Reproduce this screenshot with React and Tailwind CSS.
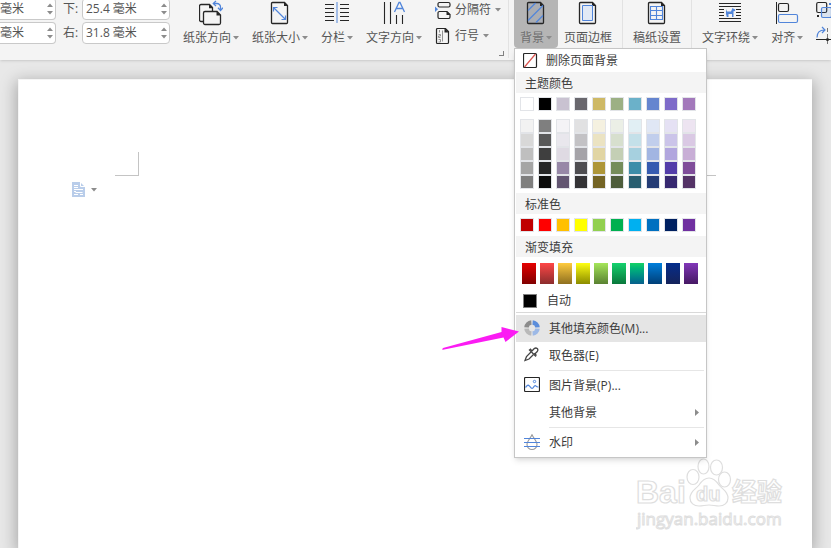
import { useState } from "react";

const THEME_COLORS = [
  "bg-white", "bg-black", "bg-[#c9c2d1]", "bg-[#69676d]", "bg-[#ceb966]",
  "bg-[#9cb084]", "bg-[#6bb1c9]", "bg-[#6585cf]", "bg-[#7e6bc9]", "bg-[#a379bb]",
];

const THEME_SHADES = [
  ["bg-[#f2f2f2]", "bg-[#7f7f7f]", "bg-[#f4f3f6]", "bg-[#e1e1e2]", "bg-[#f5f1e0]", "bg-[#ebefe6]", "bg-[#e1eff4]", "bg-[#e0e7f5]", "bg-[#e5e1f4]", "bg-[#ede4f1]"],
  ["bg-[#d8d8d8]", "bg-[#595959]", "bg-[#e9e7ed]", "bg-[#c3c2c5]", "bg-[#ebe3c2]", "bg-[#d7dfce]", "bg-[#c4e0e9]", "bg-[#c1ceec]", "bg-[#cbc4e9]", "bg-[#dac9e4]"],
  ["bg-[#bfbfbf]", "bg-[#3f3f3f]", "bg-[#dfdae3]", "bg-[#a5a3a8]", "bg-[#e1d5a3]", "bg-[#c4cfb5]", "bg-[#a6d0df]", "bg-[#a2b5e2]", "bg-[#b1a6de]", "bg-[#c8aed6]"],
  ["bg-[#a5a5a5]", "bg-[#262626]", "bg-[#9788a7]", "bg-[#4e4d51]", "bg-[#ae9638]", "bg-[#758c5a]", "bg-[#3d8da9]", "bg-[#365bb0]", "bg-[#533da9]", "bg-[#7f4d9a]"],
  ["bg-[#7f7f7f]", "bg-[#0c0c0c]", "bg-[#635672]", "bg-[#343336]", "bg-[#746425]", "bg-[#4e5d3c]", "bg-[#295e70]", "bg-[#243c75]", "bg-[#372970]", "bg-[#543367]"],
];

const STANDARD_COLORS = [
  "bg-[#c00000]", "bg-[#ff0000]", "bg-[#ffc000]", "bg-[#ffff00]", "bg-[#92d050]",
  "bg-[#00b050]", "bg-[#00b0f0]", "bg-[#0070c0]", "bg-[#002060]", "bg-[#7030a0]",
];

const GRADIENTS = [
  "from-[#e60000] to-[#800000]",
  "from-[#ff4646] to-[#8c2d2d]",
  "from-[#ffcb3e] to-[#8f7020]",
  "from-[#ffff14] to-[#8c8c00]",
  "from-[#a5e65a] to-[#5a8232]",
  "from-[#14d26e] to-[#0a783c]",
  "from-[#14d264] to-[#0a5f8c]",
  "from-[#007fdc] to-[#003f78]",
  "from-[#032d8c] to-[#14235a]",
  "from-[#8237b9] to-[#461964]",
];

const DARK = "#262626";
const BLUE = "#5185da";

function Caret({ className = "" }) {
  return (
    <svg width="6" height="4" viewBox="0 0 6 4" className={className}>
      <path d="M0 0h6L3 3.5z" fill="#8c8c8c" />
    </svg>
  );
}

// page outline with a folded corner
function PageIcon({ children, fill = "none" }) {
  return (
    <svg width="20" height="26" viewBox="0 0 20 26" fill="none">
      <path d="M2.5 2.5h12l3 3v17a1 1 0 0 1-1 1h-14a1 1 0 0 1-1-1v-19a1 1 0 0 1 1-1z" stroke={DARK} fill={fill} strokeWidth="1.3" />
      <path d="M14 2v4h4z" fill={DARK} />
      {children}
    </svg>
  );
}

function OrientationIcon() {
  return (
    <svg width="24" height="26" viewBox="0 0 24 26" fill="none" strokeWidth="1.3">
      <path d="M4.500 21.500H2a1.500 1.500 0 0 1-1.500-1.500V6A1.500 1.500 0 0 1 2 4.500h8.500l3 3V11" stroke={DARK} />
      <path d="M10 4v4.200h4z" fill={DARK} />
      <path d="M6 11.500h12l3.500 3.500v8a1.500 1.500 0 0 1-1.500 1.500H6A1.500 1.500 0 0 1 4.500 23V13A1.500 1.500 0 0 1 6 11.500z" stroke={DARK} />
      <path d="M17.500 11v4.500H22z" fill={DARK} />
      <path d="M15 3.500h3A3.500 3.500 0 0 1 21.500 7v3" stroke={BLUE} />
      <path d="M17 1l-2.700 2.500L17 6M19 7.800l2.500 2.700L24 7.800" stroke={BLUE} />
    </svg>
  );
}

function SizeIcon() {
  return (
    <PageIcon>
      <path d="M3.500 7.500l12 12M3.500 11.500v-4h4M15.500 15.500v4h-4" stroke={BLUE} strokeWidth="1.2" />
    </PageIcon>
  );
}

function ColumnsIcon() {
  return (
    <svg width="24" height="26" viewBox="0 0 24 26" strokeWidth="1">
      <path d="M0 4.500h9M0 8.500h9M0 12.500h9M0 16.500h9M0 20.500h9M15 4.500h9M15 8.500h9M15 12.500h9M15 16.500h9M15 20.500h9" stroke={DARK} />
      <path d="M12 2v21" stroke={BLUE} />
    </svg>
  );
}

function TextDirectionIcon() {
  return (
    <svg width="22" height="26" viewBox="0 0 22 26" fill="none" strokeWidth="1.1">
      <path d="M1.500 2v22M7.500 2v22M13.500 15v9M19.500 15v9" stroke={DARK} />
      <path d="M11.500 12L16 2.500h1l4.500 9.500M13 8.500h7" stroke={BLUE} strokeWidth="1.300" />
    </svg>
  );
}

function BreakIcon() {
  return (
    <svg width="16" height="18" viewBox="0 0 16 18" fill="none" strokeWidth="1.200">
      <path d="M4.500 1.500h9a1.500 1.500 0 0 1 1.500 1.500v1.500a1.500 1.500 0 0 1-1.500 1.500h-9A1.500 1.500 0 0 1 3 4.500V3a1.500 1.500 0 0 1 1.500-1.500z" stroke={DARK} />
      <path d="M4.500 10.500h7.500l3 3v2.500a1.500 1.500 0 0 1-1.500 1.500h-9A1.500 1.500 0 0 1 3 16v-4a1.500 1.500 0 0 1 1.500-1.500z" stroke={DARK} />
      <path d="M11.500 10v4h4z" fill={DARK} />
      <path d="M0 5.500l3 2.800-3 2.700z" fill={BLUE} />
    </svg>
  );
}

function LineNumberIcon() {
  return (
    <svg width="16" height="18" viewBox="0 0 16 18" fill="none">
      <path d="M2.500 1.500h8l3 3v11a1 1 0 0 1-1 1h-10a1 1 0 0 1-1-1v-13a1 1 0 0 1 1-1z" stroke={DARK} strokeWidth="1.200" />
      <path d="M9.500 1v4.500H14z" fill={DARK} />
      <path d="M4.500 3v2.500M3.500 7.500h2v1.500h-2v1.500h2M3.500 12.500h2v2.500h-2M7.500 3.500v11" stroke="#888" strokeWidth=".9" />
    </svg>
  );
}

function BackgroundIcon() {
  return (
    <PageIcon fill="#aaadb3">
      <path d="M2 10.500L9.500 3M2 20.500L17 5.500M10 22.500l7-7" stroke={BLUE} strokeWidth="1.200" />
    </PageIcon>
  );
}

function BorderIcon() {
  return (
    <PageIcon>
      <path d="M4.500 5.500h10v15h-10z" fill="#e1e9f6" stroke={BLUE} />
    </PageIcon>
  );
}

function GridPaperIcon() {
  return (
    <PageIcon>
      <path d="M3.500 6.500h12v13h-12zM3.500 10.500h12M3.500 15.500h12M9.500 6.500v13" stroke={BLUE} strokeWidth="1.100" />
    </PageIcon>
  );
}

function WrapIcon() {
  return (
    <svg width="22" height="26" viewBox="0 0 22 26">
      <path d="M0 3.500h22M0 6.500h22M0 9.500h5M17 9.500h5M0 12.500h5M17 12.500h5M0 15.500h5M17 15.500h5M0 18.500h22M0 21.500h22" stroke={DARK} />
      <path d="M7 9l1 2.500h4l1.500-3.500 1 .8 1.800.7-.3 1.500-1.500.3V17h-1.500v-3H9.500v3H7.800L7 14z" fill={BLUE} />
    </svg>
  );
}

function AlignIcon() {
  return (
    <svg width="24" height="26" viewBox="0 0 24 26" fill="none">
      <path d="M1.500 2v22" stroke={DARK} />
      <rect x="3.500" y="3.500" width="10" height="8" rx="1.500" stroke={DARK} strokeWidth="1.200" />
      <rect x="3.500" y="14.500" width="19" height="8" rx="1.500" stroke={BLUE} strokeWidth="1.200" />
    </svg>
  );
}

function GroupIcon() {
  return (
    <svg width="16" height="20" viewBox="0 0 16 20" fill="none">
      <rect x=".7" y="2.500" width="10" height="10" rx="1.500" stroke={DARK} strokeWidth="1.200" />
      <rect x="5.500" y="7.500" width="10" height="10" rx="1.500" fill={BLUE} fillOpacity=".15" stroke={BLUE} strokeWidth="1.200" />
      <path d="M1 15h2v2H1z" fill={DARK} />
      <path d="M13 3h2v2h-2z" fill={BLUE} />
    </svg>
  );
}

function RotateIcon() {
  return (
    <svg width="16" height="18" viewBox="0 0 16 18" fill="none">
      <path d="M1 11.500C1 6.500 3.500 4 8.500 4M6 1l3 3-3 3" stroke={BLUE} strokeWidth="1.200" />
      <path d="M0 13.500h16" stroke={DARK} />
      <path d="M11.500 2v16" stroke="#777" strokeDasharray="4 2" />
      <circle cx="11.500" cy="13.500" r="1.500" fill={DARK} />
    </svg>
  );
}

function Spinner({ id, label, value, onChange, cut }) {
  return (
    <div className="flex items-center">
      <label htmlFor={id} className={cut ? "sr-only" : "w-[19px] shrink-0"}>{label}</label>
      <div className={cut ? "flex w-14 h-[22px] bg-white border border-l-0 border-[#c9c9c9] rounded-r-sm" : "flex w-[88px] h-[22px] bg-white border border-[#c9c9c9] rounded-sm"}>
        <input
          id={id}
          type="text"
          value={value}
          onChange={onChange}
          className={cut ? "min-w-0 flex-1 outline-none" : "min-w-0 flex-1 pl-[3px] outline-none"}
        />
        <div className="flex flex-col justify-between w-2 py-1">
          <button type="button" aria-label="增加" className="flex">
            <Caret className="rotate-180" />
          </button>
          <button type="button" aria-label="减少" className="flex">
            <Caret />
          </button>
        </div>
      </div>
    </div>
  );
}

function ToolButton({ icon, label, caret, active, onClick }) {
  return (
    <button
      type="button"
      onClick={onClick}
      className={active
        ? "flex flex-col items-center w-11 h-12 bg-[#b5b5b5] rounded-b text-[#6f6f6f]"
        : "flex flex-col items-center shrink-0"}
    >
      {icon}
      <span className="flex items-center mt-1 leading-4 whitespace-nowrap">
        {label}
        {caret && <Caret className="ml-0.5" />}
      </span>
    </button>
  );
}

function SmallButton({ icon, label }) {
  return (
    <button type="button" className="flex items-center gap-1 leading-4 whitespace-nowrap">
      {icon}
      {label}
      <Caret />
    </button>
  );
}

function Separator() {
  return <div className="w-px h-[58px] shrink-0 bg-[#e2e2e2]" />;
}

function SectionTitle({ children }) {
  return <h3 className="h-[21px] ml-px pl-[9px] pt-px leading-[22px] bg-[#f4f4f4]">{children}</h3>;
}

function Swatches({ colors }) {
  return (
    <div className="flex gap-1 pl-[5px]">
      {colors.map((color, i) => (
        <button key={i} type="button" aria-label="颜色" className={`size-3.5 border border-[#e2e4e8] ${color}`} />
      ))}
    </div>
  );
}

function MenuItem({ icon, label, submenu, active }) {
  return (
    <button
      type="button"
      role="menuitem"
      className={active
        ? "flex items-center w-full h-[27px] pl-2 pr-[7px] bg-[#e5e5e5]"
        : "flex items-center w-full h-[27px] pl-2 pr-[7px]"}
    >
      <span className="flex w-[25px] shrink-0">{icon}</span>
      <span className="flex-1 text-left">{label}</span>
      {submenu && (
        <svg width="4" height="7" viewBox="0 0 4 7">
          <path d="M0 0l4 3.500L0 7z" fill="#8c8c8c" />
        </svg>
      )}
    </button>
  );
}

function ColorWheelIcon() {
  return (
    <svg width="16" height="17" viewBox="0 0 16 17" fill="none" strokeWidth="4.500">
      <path d="M2.500 7.400A5.300 5.300 0 0 1 7.400 2.500" stroke="#8c8c8c" />
      <path d="M8.600 2.500a5.300 5.300 0 0 1 4.900 4.900" stroke="#5b8ddb" />
      <path d="M13.500 8.600a5.300 5.300 0 0 1-4.900 4.900" stroke="#9db9e6" />
      <path d="M7.400 13.500a5.300 5.300 0 0 1-4.900-4.900" stroke="#b9b9b9" />
    </svg>
  );
}

function DropperIcon() {
  return (
    <svg width="16" height="17" viewBox="0 0 16 17" fill="none" stroke="#444" strokeWidth="1.300">
      <path d="M7 5L2.500 9.500 1 13.500 5 12 9.500 7.500" />
      <path d="M5 2.500l7 7M8 4l2-2.200q1.800-1.500 3.200-.2t-.2 3.200L10.800 7" />
      <path d="M6 1.800l2.200 2.400M10.300 6.300L12.500 8.500" />
    </svg>
  );
}

function PictureIcon() {
  return (
    <svg width="16" height="17" viewBox="0 0 16 17" fill="none">
      <rect x=".5" y=".5" width="15" height="14" rx="1" stroke={DARK} strokeWidth="1.200" />
      <path d="M1.500 10.500l1.500-1.800q1.200-1 2.300.2l2 2.200q.8.700 1.700-.2L10.500 9q.8-.7 1.600.2t2.400.8" stroke={BLUE} strokeWidth="1.200" />
      <circle cx="10.500" cy="4.500" r="1.200" stroke={BLUE} />
    </svg>
  );
}

function WatermarkIcon() {
  return (
    <svg width="16" height="17" viewBox="0 0 16 17" fill="none">
      <path d="M8 .8C6.500 4 3 7.300 3 10.500a5 5 0 0 0 10 0C13 7.300 9.500 4 8 .8z" stroke="#999" strokeWidth="1.100" />
      <path d="M0 4.500h16M0 8.500h16M0 12.500h16" stroke={BLUE} strokeWidth="1.200" />
    </svg>
  );
}

function BackgroundMenu() {
  return (
    <div role="menu" className="absolute top-full left-0 w-[193px] pb-px bg-white border border-[#c6c6c6] shadow-md text-[#3c3c3c]">
      <button type="button" role="menuitem" className="flex items-center w-full h-[23px] pt-px pl-2 gap-2">
        <svg width="15" height="18" viewBox="0 0 15 18" fill="none">
          <rect x=".5" y="1.500" width="13" height="14" rx="1" stroke={DARK} strokeWidth="1.200" />
          <path d="M1.500 15L12.500 2" stroke="#d9534f" strokeWidth="1.200" />
        </svg>
        删除页面背景
      </button>

      {/* colors */}
      <SectionTitle>主题颜色</SectionTitle>
      <div className="pt-1 pb-2">
        <Swatches colors={THEME_COLORS} />
      </div>
      <div className="pb-1">
        {THEME_SHADES.map((row, i) => (
          <Swatches key={i} colors={row} />
        ))}
      </div>

      <SectionTitle>标准色</SectionTitle>
      <div className="py-1">
        <Swatches colors={STANDARD_COLORS} />
      </div>

      <SectionTitle>渐变填充</SectionTitle>
      <div className="flex gap-1 pl-[7px] pt-1.5">
        {GRADIENTS.map((g) => (
          <button key={g} type="button" aria-label="渐变" className={`w-3.5 h-[21px] bg-linear-to-b ${g}`} />
        ))}
      </div>

      <button type="button" role="menuitem" className="flex items-center w-full h-7 pl-2 pt-1.5 gap-2.5">
        <span className="size-3.5 bg-black border border-[#808080]" />
        自动
      </button>

      {/* actions */}
      <div className="ml-px mb-0.5 border-t border-[#d9d9d9]" />
      <div className="relative ml-px">
        <MenuItem icon={<ColorWheelIcon />} label="其他填充颜色(M)..." active />
        <svg width="78" height="24" viewBox="0 0 78 24" className="absolute top-[11px] -left-[74px]">
          <path d="M0 23.500L1 22 59.500 6V1L77 5.500 63.500 16 61.500 11.500 1 23.800z" fill="#fb1cf3" />
        </svg>
      </div>
      <div className="ml-px">
        <MenuItem icon={<DropperIcon />} label="取色器(E)" />
        <div className="ml-[33px] mr-0.5 my-px border-t border-[#e6e6e6]" />
        <MenuItem icon={<PictureIcon />} label="图片背景(P)..." />
        <MenuItem label="其他背景" submenu />
        <div className="ml-[33px] mr-0.5 my-px border-t border-[#e6e6e6]" />
        <MenuItem icon={<WatermarkIcon />} label="水印" submenu />
      </div>
    </div>
  );
}

function BaiduLogo() {
  return (
    <svg width="152" height="74" viewBox="0 0 152 74" fill="#fff" stroke="#dedede" strokeWidth="1.200">
      <text x="0" y="45" fontFamily="Liberation Sans, sans-serif" fontWeight="700" fontSize="32">Bai</text>
      <ellipse cx="57" cy="19" rx="6" ry="7.500" />
      <ellipse cx="67.500" cy="8.500" rx="5.500" ry="7.500" />
      <ellipse cx="80.500" cy="9.500" rx="6" ry="7.500" />
      <ellipse cx="88.500" cy="21.500" rx="6" ry="7.500" />
      <path d="M73 20c-5 0-8 4-10 7-3 4-9 6-9 13 0 5 4 8 9 8 4 0 6-1 10-1s6 1 10 1c5 0 9-3 9-8 0-7-6-9-9-13-2-3-5-7-10-7z" />
      <text x="60" y="43" fontFamily="Liberation Sans, sans-serif" fontWeight="700" fontSize="20">du</text>
      <text x="96" y="43" fontFamily="Noto Sans CJK SC, sans-serif" fontWeight="700" fontSize="25">经验</text>
      <text x="1" y="67" fontFamily="Open Sans, sans-serif" fontWeight="500" fontSize="17" strokeWidth="1">jingyan.baidu.com</text>
    </svg>
  );
}

function App() {

  const [open, setOpen] = useState(true);
  const [margins, setMargins] = useState({
    top: "毫米",
    bottom: "25.4 毫米",
    left: "毫米",
    right: "31.8 毫米",
  });

  const handleChange = (e) => {
    const { id, value } = e.target;
    setMargins((prev) => ({ ...prev, [id]: value }));
  };

  return (
    <div className="flex flex-col h-screen overflow-hidden bg-[#e8e8e8] font-['Open_Sans','Noto_Sans_CJK_SC',sans-serif] text-xs text-[#555555]">

      {/* RIBBON */}
      <header className="relative z-10 flex items-start h-[60px] shrink-0 bg-[#f4f4f4] shadow">

        <div className="flex shrink-0 gap-[7px] -mt-0.5">
          <div className="flex flex-col gap-0.5">
            <Spinner id="top" label="上:" value={margins.top} onChange={handleChange} cut />
            <Spinner id="left" label="左:" value={margins.left} onChange={handleChange} cut />
          </div>
          <div className="flex flex-col gap-0.5">
            <Spinner id="bottom" label="下:" value={margins.bottom} onChange={handleChange} />
            <Spinner id="right" label="右:" value={margins.right} onChange={handleChange} />
          </div>
        </div>

        <div className="relative flex shrink-0 h-full gap-[13px] items-start pl-[13px] pr-[7px]">
          <ToolButton icon={<OrientationIcon />} label="纸张方向" caret />
          <ToolButton icon={<SizeIcon />} label="纸张大小" caret />
          <ToolButton icon={<ColumnsIcon />} label="分栏" caret />
          <ToolButton icon={<TextDirectionIcon />} label="文字方向" caret />
          <div className="flex flex-col gap-2 pt-px">
            <SmallButton icon={<BreakIcon />} label="分隔符" />
            <SmallButton icon={<LineNumberIcon />} label="行号" />
          </div>
          <button type="button" aria-label="页面设置" className="absolute bottom-1 right-1 size-[5px] border-r border-b border-[#808080]" />
        </div>
        <Separator />

        <div className="flex shrink-0 items-start gap-1.5 pl-[5px] pr-2.5">
          <div className="relative">
            <ToolButton icon={<BackgroundIcon />} label="背景" caret active onClick={() => setOpen(!open)} />
            {open && <BackgroundMenu />}
          </div>
          <ToolButton icon={<BorderIcon />} label="页面边框" />
        </div>
        <Separator />

        <div className="shrink-0 px-2.5">
          <ToolButton icon={<GridPaperIcon />} label="稿纸设置" />
        </div>
        <Separator />

        <div className="flex shrink-0 items-start gap-[13px] pl-2.5">
          <ToolButton icon={<WrapIcon />} label="文字环绕" caret />
          <ToolButton icon={<AlignIcon />} label="对齐" caret />
          <div className="flex flex-col gap-1.5">
            <button type="button" aria-label="组合"><GroupIcon /></button>
            <button type="button" aria-label="旋转"><RotateIcon /></button>
          </div>
        </div>
      </header>

      {/* DOCUMENT */}
      <main className="flex flex-1 pl-[18px] pr-[19px] pt-[19px]">
        <div className="flex flex-col justify-between flex-1 px-6 bg-white border-t border-l border-[#f5f5f5] shadow-[0_4px_15px_2px_rgba(0,0,0,0.28)]">
          <div>
            <div className="flex justify-between px-[72px] pt-[72px]">
              <div className="size-6 border-r border-b border-[#c4c4c4]" />
              <div className="size-6 border-l border-b border-[#c4c4c4]" />
            </div>
            <button type="button" aria-label="段落布局" className="flex items-center gap-1.5 mt-1.5 ml-[29px]">
              <svg width="13" height="15" viewBox="0 0 13 15">
                <path d="M0 0h8l5 5v10H0z" fill="#b9cdea" />
                <path d="M8.500 0v4.500H13M2 3.500h4M2 5.500h4M2 7.500h9M2 9.500h2M2 12.500h4M3.500 10.500h7M8 12.500h3" stroke="#fff" fill="none" />
              </svg>
              <Caret />
            </button>
          </div>
          <div className="flex justify-end pb-4">
            <BaiduLogo />
          </div>
        </div>
      </main>

    </div>
  );
}

export default App;
